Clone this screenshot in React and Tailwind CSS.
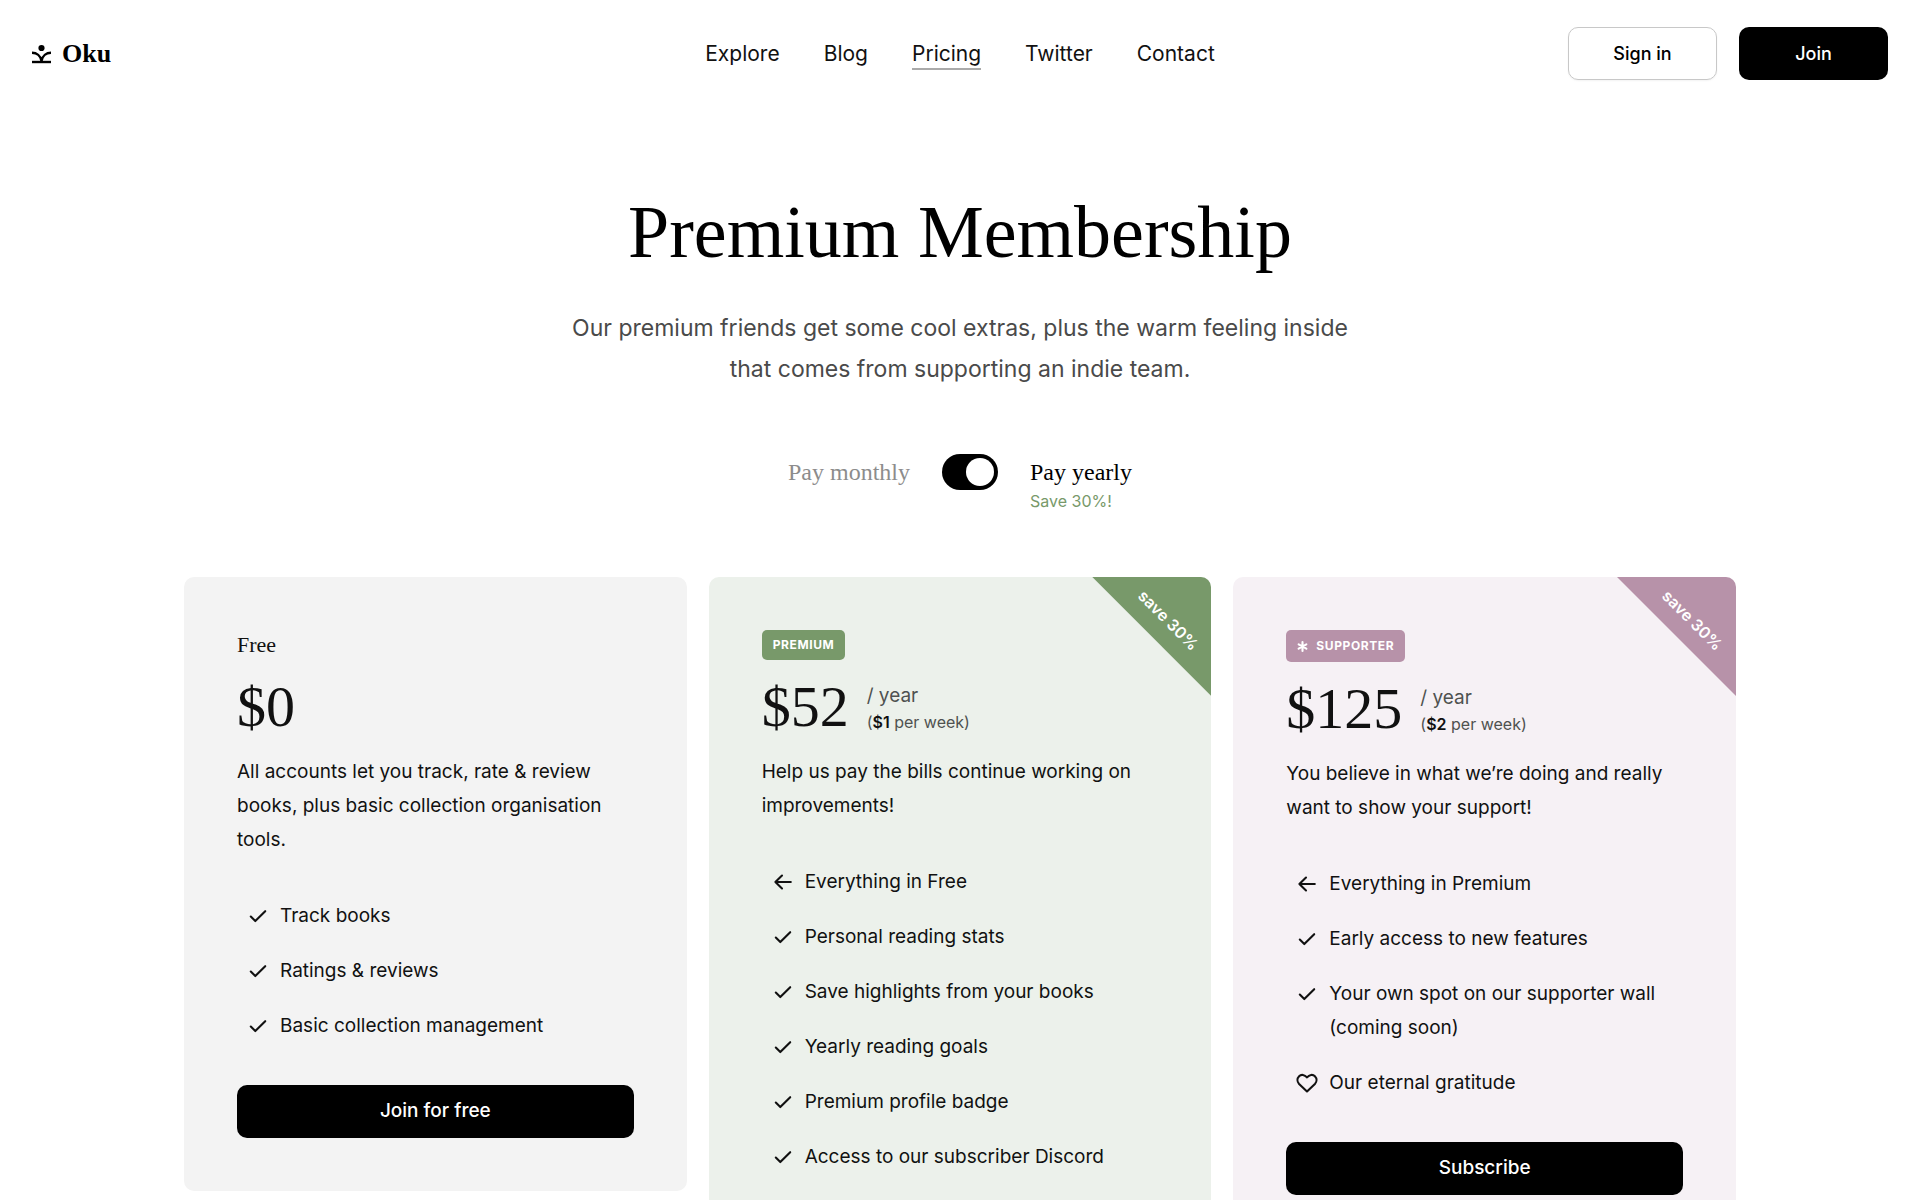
import { useState } from 'react';

const navLinks = ['Explore', 'Blog', 'Pricing', 'Twitter', 'Contact'];

const plans = [
  {
    id: 'free',
    name: 'Free',
    yearly: '$0',
    monthly: '$0',
    description: 'All accounts let you track, rate & review books, plus basic collection organisation tools.',
    features: [
      { icon: 'check', text: 'Track books' },
      { icon: 'check', text: 'Ratings & reviews' },
      { icon: 'check', text: 'Basic collection management' },
    ],
    action: 'Join for free',
    card: 'bg-[#f3f3f3]',
  },
  {
    id: 'premium',
    badge: 'Premium',
    yearly: '$52',
    monthly: '$6',
    perWeek: '$1',
    description: 'Help us pay the bills continue working on improvements!',
    features: [
      { icon: 'arrow', text: 'Everything in Free' },
      { icon: 'check', text: 'Personal reading stats' },
      { icon: 'check', text: 'Save highlights from your books' },
      { icon: 'check', text: 'Yearly reading goals' },
      { icon: 'check', text: 'Premium profile badge' },
      { icon: 'check', text: 'Access to our subscriber Discord' },
    ],
    action: 'Subscribe',
    card: 'bg-[#ecf1eb]',
    accent: 'bg-[#78996a]',
    badgeHeight: 'h-[30px]',
  },
  {
    id: 'supporter',
    badge: 'Supporter',
    starred: true,
    yearly: '$125',
    monthly: '$15',
    perWeek: '$2',
    description: 'You believe in what we’re doing and really want to show your support!',
    features: [
      { icon: 'arrow', text: 'Everything in Premium' },
      { icon: 'check', text: 'Early access to new features' },
      { icon: 'check', text: 'Your own spot on our supporter wall (coming soon)' },
      { icon: 'heart', text: 'Our eternal gratitude' },
    ],
    action: 'Subscribe',
    card: 'bg-[#f6f1f5]',
    accent: 'bg-[#b792a9]',
    badgeHeight: 'h-8',
  },
];

function Logo() {
  return (
    <svg className="h-5 w-5" viewBox="0 0 20 20" fill="none" stroke="currentColor" strokeWidth="2.4" aria-hidden="true">
      <circle cx="9.5" cy="4" r="3.1" fill="currentColor" stroke="none" />
      <path d="M0 8.8C4.6 8.8 8.6 11.6 9.5 17C10.4 11.6 14.4 8.8 19 8.8" />
      <path d="M0 18H19" />
    </svg>
  );
}

function FeatureIcon({ name }) {
  const paths = {
    check: 'M4.8 12.6L9.3 17.1L19.2 7.2',
    arrow: 'M19.8 12H4.4M11 5.6L4.4 12L11 18.4',
    heart: 'M19.9 5.2C17.8 3.1 14.4 3.6 12 6.4C9.6 3.6 6.2 3.1 4.1 5.2C1.9 7.5 2 10.7 4.1 12.9L12 20.4L19.9 12.9C22 10.7 22.1 7.5 19.9 5.2z',
  };

  return (
    <svg className="mt-[5px] size-6 shrink-0" viewBox="0 0 24 24" fill="none" stroke="currentColor" strokeWidth="2.1" strokeLinecap="round" strokeLinejoin="round" aria-hidden="true">
      <path d={paths[name]} />
    </svg>
  );
}

function Asterisk() {
  return (
    <svg className="size-[11px]" viewBox="0 0 12 12" stroke="currentColor" strokeWidth="2.3" strokeLinecap="round" aria-hidden="true">
      <path d="M6 1.2V10.8M1.8 3.6L10.2 8.4M10.2 3.6L1.8 8.4" />
    </svg>
  );
}

function PlanCard({ plan, isYearly }) {
  return (
    <article className={`relative overflow-hidden rounded-[10px] p-[53px] ${plan.card}`}>
      {plan.accent && isYearly && (
        <div className={`absolute top-0 right-0 size-[119px] text-white [clip-path:polygon(0_0,100%_0,100%_100%)] ${plan.accent}`}>
          <div className="ml-auto flex size-[86px] items-center justify-center">
            <span className="rotate-45 text-base font-semibold whitespace-nowrap">save 30%</span>
          </div>
        </div>
      )}

      {plan.badge ? (
        <h2 className={`flex w-fit items-center gap-2 rounded-[5px] px-[11px] text-xs font-bold tracking-wider text-white uppercase ${plan.accent} ${plan.badgeHeight}`}>
          {plan.starred && <Asterisk />}
          {plan.badge}
        </h2>
      ) : (
        <h2 className="font-['Liberation_Serif',serif] text-[22px] leading-[30px]">{plan.name}</h2>
      )}

      <div className="mt-[23px] flex min-h-[52px] gap-[18px]">
        <p className="font-['Liberation_Serif',serif] text-[58px] leading-[48px]">
          {isYearly ? plan.yearly : plan.monthly}
        </p>
        {plan.perWeek && (
          <div className="text-[#4f5250]">
            <p className="text-[19px] leading-[26px]">{isYearly ? '/ year' : '/ month'}</p>
            <p className="text-base leading-[26px]">
              (<strong className="font-semibold text-[#111]">{plan.perWeek}</strong> per week)
            </p>
          </div>
        )}
      </div>

      <p className="mt-5 text-[19px] leading-[34px]">{plan.description}</p>

      <ul className="mt-[42px] flex flex-col gap-[21px] pl-[9px]">
        {plan.features.map((feature) => (
          <li key={feature.text} className="flex gap-[10px] text-[19px] leading-[34px]">
            <FeatureIcon name={feature.icon} />
            <span>{feature.text}</span>
          </li>
        ))}
      </ul>

      <button className="mt-[42px] h-[53px] w-full rounded-[10px] bg-black text-[19px] font-medium text-white" type="button">
        {plan.action}
      </button>
    </article>
  );
}

function App() {
  const [isYearly, setIsYearly] = useState(true);

  return (
    <div className="min-h-screen bg-white font-['Inter',sans-serif] text-[#111]">
      <header className="flex items-center px-8 py-[27px]">
        <div className="flex-1">
          <a className="flex w-fit items-center gap-[10px] text-black" href="#home">
            <Logo />
            <span className="font-['Liberation_Serif',serif] text-[26px] leading-8 font-bold">Oku</span>
          </a>
        </div>
        <nav className="flex gap-11">
          {navLinks.map((link) => (
            <a
              key={link}
              href={`#${link.toLowerCase()}`}
              className={`border-b-2 pt-[2px] text-[21px] leading-7 ${link === 'Pricing' ? 'border-[#aaa]' : 'border-transparent'}`}
            >
              {link}
            </a>
          ))}
        </nav>
        <div className="flex flex-1 justify-end gap-[22px]">
          <button className="h-[53px] w-[149px] rounded-[10px] border border-[#c8c8c8] text-lg font-medium text-black shadow-xs" type="button">
            Sign in
          </button>
          <button className="h-[53px] w-[149px] rounded-[10px] bg-black text-lg font-medium text-white" type="button">
            Join
          </button>
        </div>
      </header>

      <main>
        <section className="flex flex-col items-center text-center">
          <h1 className="mt-[81px] font-['Liberation_Serif',serif] text-[74px] leading-[88px] text-black">
            Premium Membership
          </h1>
          <p className="mt-8 max-w-[800px] text-[23px] leading-[41px] text-[#4a4a4a]">
            Our premium friends get some cool extras, plus the warm feeling inside that comes from supporting an indie team.
          </p>

          <div className="mt-16 flex items-start gap-8 font-['Liberation_Serif',serif] text-2xl leading-9">
            <span className={isYearly ? 'text-[#8c8c8c]' : 'text-black'}>Pay monthly</span>
            <input
              id="billing"
              type="checkbox"
              role="switch"
              checked={isYearly}
              onChange={(event) => setIsYearly(event.target.checked)}
              className="flex h-9 w-14 appearance-none items-center rounded-full bg-black p-1 before:size-7 before:rounded-full before:bg-white checked:justify-end"
            />
            <label htmlFor="billing" className="text-left">
              <span className={isYearly ? 'block text-black' : 'block text-[#8c8c8c]'}>Pay yearly</span>
              <span className="block font-['Inter',sans-serif] text-base leading-[22px] text-[#78996a]">Save 30%!</span>
            </label>
          </div>
        </section>

        <section className="mx-auto mt-[65px] mb-20 grid max-w-[1552px] grid-cols-3 items-start gap-[22px]">
          {plans.map((plan) => (
            <PlanCard key={plan.id} plan={plan} isYearly={isYearly} />
          ))}
        </section>
      </main>
    </div>
  );
}

export default App;
